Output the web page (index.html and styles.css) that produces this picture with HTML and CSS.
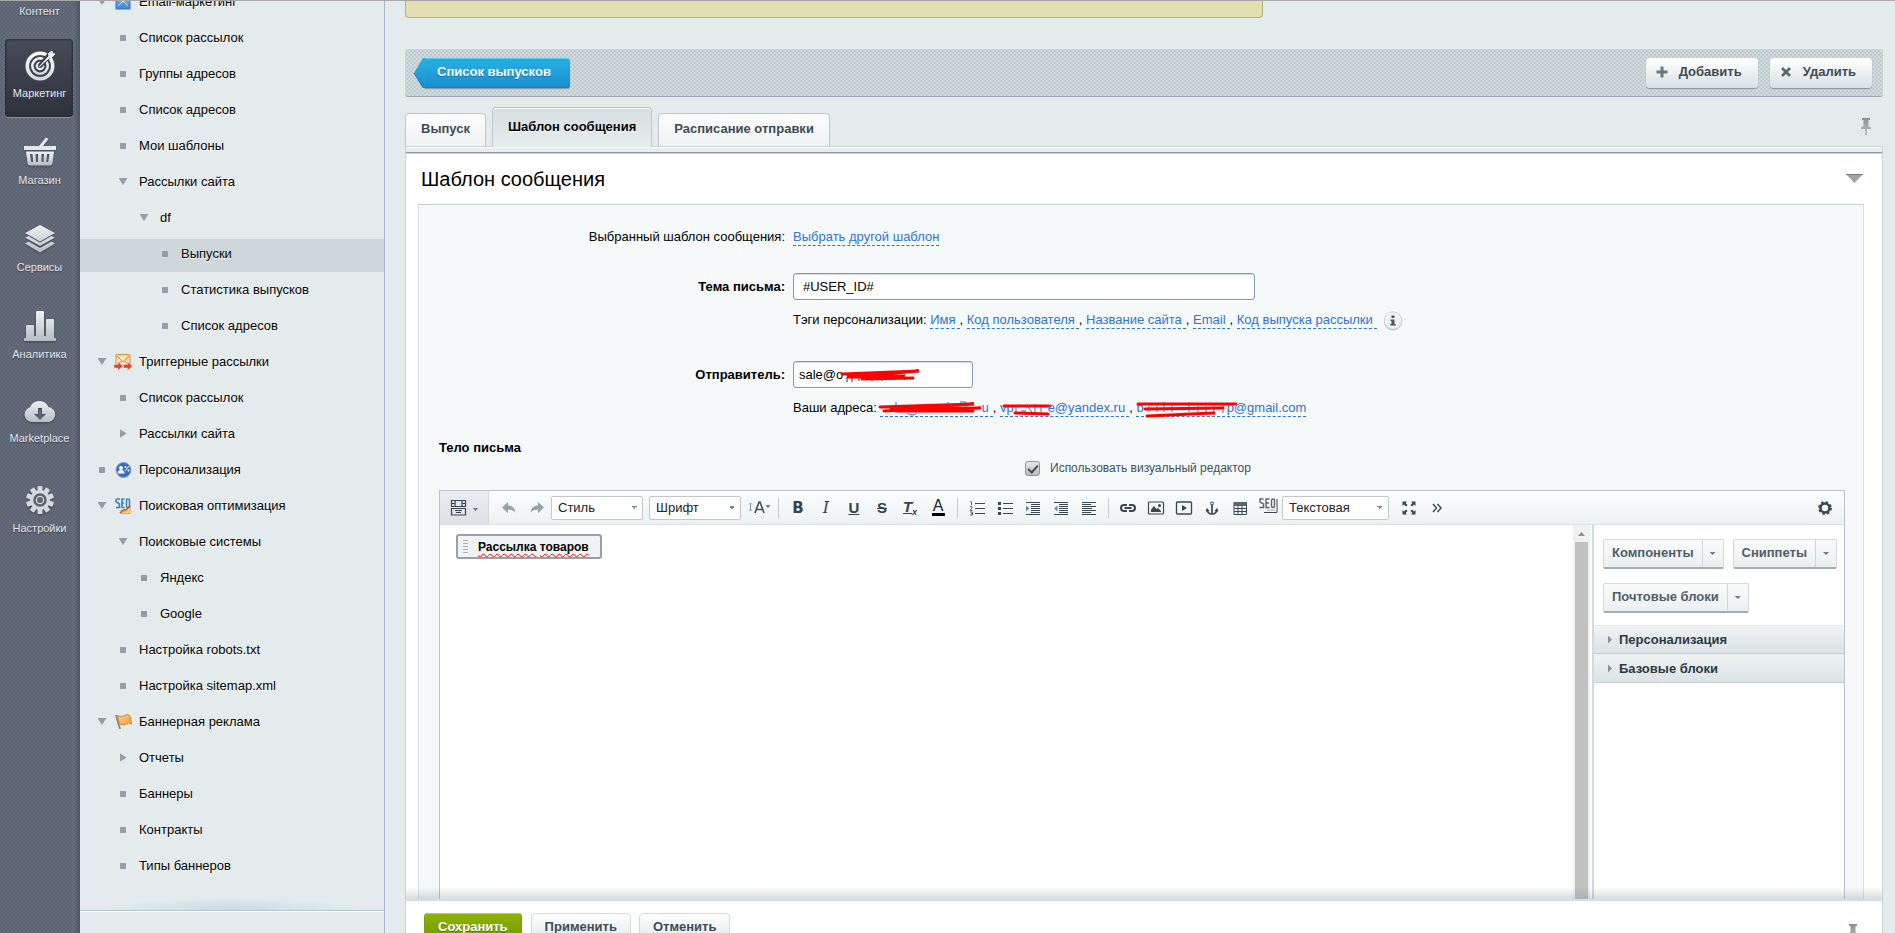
FILE: index.html
```html
<!DOCTYPE html>
<html lang="ru">
<head>
<meta charset="utf-8">
<title>Шаблон сообщения</title>
<link rel="stylesheet" href="styles.css">
</head>
<body>
<svg class="defs" width="0" height="0" aria-hidden="true">
  <defs>
    <linearGradient id="steel" x1="0" y1="0" x2="0" y2="1"><stop offset="0" stop-color="#eef2f3"/><stop offset="1" stop-color="#b3bec2"/></linearGradient>
    <linearGradient id="white" x1="0" y1="0" x2="0" y2="1"><stop offset="0" stop-color="#ffffff"/><stop offset="1" stop-color="#d3dbde"/></linearGradient>
    <linearGradient id="pin" x1="0" y1="0" x2="0" y2="1"><stop offset="0" stop-color="#8b9296"/><stop offset="1" stop-color="#a9b0b3"/></linearGradient>
    <linearGradient id="blue" x1="0" y1="0" x2="0" y2="1"><stop offset="0" stop-color="#8cbcf0"/><stop offset="1" stop-color="#3d7fd6"/></linearGradient>
    <linearGradient id="orange" x1="0" y1="0" x2="1" y2="1"><stop offset="0" stop-color="#ffcf95"/><stop offset="1" stop-color="#f39a3e"/></linearGradient>
  </defs>
</svg>
<div class="app">
  <nav class="rail">
    <a class="rail-item rail-first" href="#"><span class="rail-icon"></span>Контент</a>
    <a class="rail-item active" href="#"><span class="rail-icon"><svg width="32" height="32" viewBox="0 0 32 32"><circle cx="16" cy="17" r="12.700" fill="none" stroke="url(#white)" stroke-width="3.600"/><circle cx="16" cy="17" r="7.700" fill="none" stroke="url(#white)" stroke-width="2.600"/><circle cx="16" cy="17" r="3.200" fill="none" stroke="#e3e9eb" stroke-width="2.200"/><path d="M16 17L26 5" stroke="#3c404c" stroke-width="5"/><path d="M15.500 17.500L25 7l-.5-2.500L28 2l.3 2.500 2.700.5-3.500 3.500H25.500z" fill="#e9eef0" stroke="#e9eef0"/></svg></span>Маркетинг</a>
    <a class="rail-item" href="#"><span class="rail-icon"><svg width="32" height="30" viewBox="0 0 32 30"><path d="M15 9L22 0.500l2.500 1.500L19 9h13v4H0V9z" fill="#e4eaec"/><path fill-rule="evenodd" fill="url(#steel)" d="M2 14.500h28l-1.500 12q-.3 2-2.500 2H6q-2.200 0-2.500-2zM6 17l1.200 8h2L8.500 17zM11.500 17l.5 8h2v-8zM17.500 17v8h2l.5-8zM23 17l-.8 8h2l1.300-8z"/></svg></span>Магазин</a>
    <a class="rail-item" href="#"><span class="rail-icon"><svg width="32" height="30" viewBox="0 0 32 30"><path fill="url(#steel)" d="M16 1l15 8-15 8.500L1 9zM1 13.500L4.500 12 16 18.500 27.500 12l3.500 1.500L16 22zM1 19.500L4.500 17.500 16 24l11.500-6.500 3.500 2L16 28.500z"/></svg></span>Сервисы</a>
    <a class="rail-item" href="#"><span class="rail-icon"><svg width="32" height="32" viewBox="0 0 32 32"><path fill="url(#steel)" d="M2 28V16q0-1 1-1h6q1 0 1 1v10h2V2q0-1 1-1h6q1 0 1 1v24h2V10q0-1 1-1h6q1 0 1 1v18h2v3H0v-3z"/></svg></span>Аналитика</a>
    <a class="rail-item rail-cloud" href="#"><span class="rail-icon"><svg width="32" height="24" viewBox="0 0 32 24"><path fill-rule="evenodd" fill="url(#steel)" d="M8 23a7.500 7.500 0 0 1-2-14.700A10 10 0 0 1 24.500 8 7.600 7.600 0 0 1 25 23zM14 9v6h-4l6 6 6-6h-4V9z"/></svg></span>Marketplace</a>
    <a class="rail-item" href="#"><span class="rail-icon"><svg width="30" height="30" viewBox="-15 -15 30 30"><g fill="#d3dadd"><rect x="-2.500" y="-14" width="5" height="28" rx="1"/><rect x="-2.500" y="-14" width="5" height="28" rx="1" transform="rotate(36)"/><rect x="-2.500" y="-14" width="5" height="28" rx="1" transform="rotate(72)"/><rect x="-2.500" y="-14" width="5" height="28" rx="1" transform="rotate(108)"/><rect x="-2.500" y="-14" width="5" height="28" rx="1" transform="rotate(144)"/><circle r="10"/></g><circle r="5.500" fill="#d3dadd" stroke="#5c6270" stroke-width="2.500"/><circle r="3" fill="#5f6574"/></svg></span>Настройки</a>
  </nav>

  <nav class="tree">
    <ul class="tree-list">
      <li class="lv0"><i class="mark open"></i><svg class="tico" width="18" height="18" viewBox="0 0 18 18"><rect x="2" y="2" width="14" height="14" fill="url(#blue)" stroke="#3a77c8"/><path d="M4 13l5-5 5 5M4 5l5 4 5-4" fill="none" stroke="#d7e8fb"/></svg><a href="#">Email-маркетинг</a></li>
      <li class="lv1"><i class="mark dot"></i><a href="#">Список рассылок</a></li>
      <li class="lv1"><i class="mark dot"></i><a href="#">Группы адресов</a></li>
      <li class="lv1"><i class="mark dot"></i><a href="#">Список адресов</a></li>
      <li class="lv1"><i class="mark dot"></i><a href="#">Мои шаблоны</a></li>
      <li class="lv1"><i class="mark open"></i><a href="#">Рассылки сайта</a></li>
      <li class="lv2"><i class="mark open"></i><a href="#">df</a></li>
      <li class="lv3 current"><i class="mark dot"></i><a href="#">Выпуски</a></li>
      <li class="lv3"><i class="mark dot"></i><a href="#">Статистика выпусков</a></li>
      <li class="lv3"><i class="mark dot"></i><a href="#">Список адресов</a></li>
      <li class="lv0"><i class="mark open"></i><svg class="tico" width="18" height="18" viewBox="0 0 18 18"><rect x="2" y="1.500" width="14" height="12" rx="1" fill="#fde3b8" stroke="#e58a35"/><path d="M2.500 2.500L9 9l6.500-6.500M3 13l4-5M15 13l-4-5" fill="none" stroke="#e58a35"/><path d="M0 11.500h4V9l5 4-5 4.500V15H0zM9.500 11.500h4V9l5 4-5 4.500V15h-4z" fill="#d8483d" stroke="#f6d6cf" stroke-width=".5"/></svg><a href="#">Триггерные рассылки</a></li>
      <li class="lv1"><i class="mark dot"></i><a href="#">Список рассылок</a></li>
      <li class="lv1"><i class="mark shut"></i><a href="#">Рассылки сайта</a></li>
      <li class="lv0"><i class="mark dot"></i><svg class="tico" width="18" height="18" viewBox="0 0 18 18"><circle cx="9.500" cy="9" r="7.500" fill="#3c6cc0" stroke="#7da0dc"/><circle cx="7" cy="7" r="2" fill="#fff"/><path d="M3.500 12.500q0-3.500 3.500-3.500t3.500 3.500z" fill="#fff"/><path d="M11 10l4-5" stroke="#fff"/><circle cx="11.500" cy="6" r="1" fill="#fff"/><circle cx="14.500" cy="9.500" r="1" fill="#fff"/></svg><a href="#">Персонализация</a></li>
      <li class="lv0"><i class="mark open"></i><svg class="tico" width="18" height="18" viewBox="0 0 18 18"><path d="M7 16.500V13l3 1 6-5.500v8z" fill="#fbd36b" stroke="#e0a030" stroke-width=".8"/><path d="M6 2H3.500Q2 2 2 3.500v1L5.500 7v3.500H2M10.500 2H8v8.500h2.500M8 6h2" fill="none" stroke="#3d80c9" stroke-width="1.600"/><rect x="12.500" y="2" width="3" height="8.500" rx="1" fill="none" stroke="#3d80c9" stroke-width="1.500"/><path d="M6 16l4-3.500 1.500 1L16 9" fill="none" stroke="#d6442c" stroke-width="1.200"/></svg><a href="#">Поисковая оптимизация</a></li>
      <li class="lv1"><i class="mark open"></i><a href="#">Поисковые системы</a></li>
      <li class="lv2"><i class="mark dot"></i><a href="#">Яндекс</a></li>
      <li class="lv2"><i class="mark dot"></i><a href="#">Google</a></li>
      <li class="lv1"><i class="mark dot"></i><a href="#">Настройка robots.txt</a></li>
      <li class="lv1"><i class="mark dot"></i><a href="#">Настройка sitemap.xml</a></li>
      <li class="lv0"><i class="mark open"></i><svg class="tico" width="18" height="18" viewBox="0 0 18 18"><path d="M2 2l4 14" stroke="#8b8b86" stroke-width="2"/><path d="M3.500 2.500q4 2.500 7 0t5.500.500l1.500 8q-3-2-5.500 0t-6.500 0z" fill="url(#orange)" stroke="#d98428"/></svg><a href="#">Баннерная реклама</a></li>
      <li class="lv1"><i class="mark shut"></i><a href="#">Отчеты</a></li>
      <li class="lv1"><i class="mark dot"></i><a href="#">Баннеры</a></li>
      <li class="lv1"><i class="mark dot"></i><a href="#">Контракты</a></li>
      <li class="lv1"><i class="mark dot"></i><a href="#">Типы баннеров</a></li>
    </ul>
    <div class="tree-end"></div>
  </nav>

  <main class="main">
    <div class="notice"></div>
    <div class="actions">
      <a class="back" href="#"><svg width="11" height="30" viewBox="0 0 11 30"><defs><linearGradient id="arrow" x1="0" y1="0" x2="0" y2="1"><stop offset="0" stop-color="#25b2e2"/><stop offset="1" stop-color="#1b8dd2"/></linearGradient></defs><path d="M11 0H9L0 15l9 15h2z" fill="url(#arrow)"/><path d="M0 15l9 14.500h2" fill="none" stroke="#1380bb"/></svg><span>Список выпусков</span></a>
      <div class="actions-right">
        <button class="btn" type="button"><svg width="12" height="12" viewBox="0 0 12 12"><path d="M4.500.500h3v4h4v3h-4v4h-3v-4h-4v-3h4z" fill="#6c777c"/></svg>Добавить</button>
        <button class="btn" type="button"><svg width="12" height="12" viewBox="0 0 12 12"><path d="M2 2l8 8M10 2l-8 8" stroke="#5d686e" stroke-width="2.800"/></svg>Удалить</button>
      </div>
    </div>
    <div class="tabs">
      <button class="tab" type="button">Выпуск</button>
      <button class="tab tab-on" type="button">Шаблон сообщения</button>
      <button class="tab" type="button">Расписание отправки</button>
      <svg class="tabs-pin" width="10" height="17" viewBox="0 0 10 17"><path d="M1 0h8v2H7.500v6L10 9.500V11H0V9.500L2.500 8V2H1z" fill="url(#pin)"/><path d="M5 11v6" stroke="#848b8f"/></svg>
    </div>
    <div class="panel">
      <header class="panel-head"><h1>Шаблон сообщения</h1><svg width="18" height="9" viewBox="0 0 18 9"><path d="M0 0h17L8.500 9z" fill="#9ba3a6"/><path d="M0 .5h17" stroke="#767e82"/></svg></header>
      <form class="sheet" id="letter">
        <div class="row row-template"><span class="lbl">Выбранный шаблон сообщения:</span><div><a class="dash" href="#">Выбрать другой шаблон</a></div></div>
        <div class="row row-field"><label class="lbl strong" for="subject">Тема письма:</label><input class="txt txt-wide" id="subject" type="text" value="#USER_ID#"></div>
        <div class="row row-hint"><span></span><div class="hint">Тэги персонализации: <a class="dash tail" href="#">Имя</a>, <a class="dash tail" href="#">Код пользователя</a>, <a class="dash tail" href="#">Название сайта</a>, <a class="dash tail" href="#">Email</a>, <a class="dash tail" href="#">Код выпуска рассылки</a><svg class="info" width="20" height="20" viewBox="0 0 20 20"><circle cx="10" cy="10.500" r="9" fill="#b9c0c3"/><circle cx="10" cy="9.500" r="8.700" fill="#f0f3f4" stroke="#c9d0d2" stroke-width=".8"/><path d="M8.500 4.500h3v2.500h-3zM7.500 8.500h4V13h1.200v1.500H7.300V13h1.200v-3h-1z" fill="#4c565b"/></svg></div></div>
        <div class="row row-field"><label class="lbl strong" for="sender">Отправитель:</label><div class="over"><input class="txt" id="sender" type="text" value="sale@o"><svg class="scrawl" width="82" height="14" viewBox="0 0 82 14"><path d="M8 8v5M13 8v5M20 7v5M33 7v5M43 3v9M50 3h5M66 8v3" fill="none" stroke="#333"/><path d="M3 5L80 2 8 8l58-1-44 3 52-1" fill="none" stroke="#f00" stroke-width="3" stroke-linecap="round"/></svg></div></div>
        <div class="row row-mails"><span></span><div class="hint">Ваши адреса: <a class="dash tail mail" href="#"><svg width="101" height="14" viewBox="0 0 101 14"><path d="M16 1v11M27 12q5 4 10 0M68 1v4M80 1l6 0v10" fill="none" stroke="#2f73d6"/><path d="M0 6L94 3 10 8l91-1-84 3 76 0M4 10l40-2" fill="none" stroke="#f00" stroke-width="3" stroke-linecap="round"/></svg>u</a>, <a class="dash tail mail" href="#">vp<svg width="34" height="14" viewBox="0 0 34 14"><path d="M2 5v6M7 10h5M14 6l4 5M21 3v8M27 6v5" fill="none" stroke="#2f73d6"/><path d="M-10 5h46M1 12l33 1" fill="none" stroke="#f00" stroke-width="3" stroke-linecap="round"/></svg>e@yandex.ru</a>, <a class="dash mail" href="#">b<svg width="83" height="14" viewBox="0 0 83 14"><path d="M5 5v6M13 5v6M20 1v10M28 5v6M45 1v10M54 5v6M62 5v6M70 5v9M79 2v10" fill="none" stroke="#2f73d6"/><path d="M-6 3h98M1 8l78-1M3 15l67-3" fill="none" stroke="#f00" stroke-width="3" stroke-linecap="round"/></svg>p@gmail.com</a></div></div>
        <h2 class="body-title">Тело письма</h2>
        <div class="visual"><input id="visual" type="checkbox" checked><label for="visual">Использовать визуальный редактор</label></div>

        <section class="editor">
          <div class="bar">
            <button class="view" type="button" aria-label="Вид"><svg width="28" height="18" viewBox="0 0 28 18"><path d="M1.500 1.500h14v6h-14zM5 1.500v6M12 1.500v6M2 4.500h3M12 4.500h3M1.500 9.500h14v6.500h-14zM5 11.500h7M6 13.500h5" fill="none" stroke="#3a4650" stroke-width="1.200"/><path d="M23 9h5l-2.500 3z" fill="#6b757c"/></svg></button>
            <div class="group group-undo">
              <button class="tool" type="button" aria-label="Отменить"><svg width="16" height="14" viewBox="0 0 16 14"><path d="M7 1v3.500q6.500 0 7.500 7Q12 8.500 7 8.500V12L1 6.500z" fill="#98a1a6"/></svg></button>
              <button class="tool" type="button" aria-label="Повторить"><svg width="16" height="14" viewBox="0 0 16 14"><path d="M9 1v3.500q-6.500 0-7.500 7Q4 8.500 9 8.500V12l6-5.500z" fill="#98a1a6"/></svg></button>
            </div>
            <select class="pick" aria-label="Стиль"><option>Стиль</option></select>
            <select class="pick" aria-label="Шрифт"><option>Шрифт</option></select>
            <button class="tool tool-size" type="button" aria-label="Размер"><svg width="24" height="16" viewBox="0 0 24 16"><path d="M2.500 3v8M1 4.500L2.500 3 4 4.500M1 9.500L2.500 11 4 9.500" fill="none" stroke="#8b959a"/><path d="M7 13l4-11h1l4 11M8.500 9.500h6" fill="none" stroke="#4a565e" stroke-width="1.700"/><path d="M17.500 5h5l-2.500 3z" fill="#6b757c"/></svg></button>
            <span class="sep"></span>
            <div class="group">
              <button class="tool" type="button" aria-label="Жирный"><b>B</b></button>
              <button class="tool" type="button" aria-label="Курсив"><em>I</em></button>
              <button class="tool" type="button" aria-label="Подчеркнутый"><u>U</u></button>
              <button class="tool" type="button" aria-label="Зачеркнутый"><s>S</s></button>
              <button class="tool" type="button" aria-label="Очистить"><span class="clear">T<sub>x</sub></span></button>
              <button class="tool" type="button" aria-label="Цвет"><span class="color">A</span></button>
            </div>
            <span class="sep"></span>
            <div class="group">
              <button class="tool" type="button" aria-label="Нумерация"><svg width="16" height="16" viewBox="0 0 16 16"><path d="M6 3.500h10M6 8.500h10M6 13.500h10" stroke="#3a4650"/><path d="M1.500 1.500h1V5M1 6.500h2v1.500L1 10.500h2.500M1 12h2.500v3H1M2 13.500h1" fill="none" stroke="#59646c"/></svg></button>
              <button class="tool" type="button" aria-label="Список"><svg width="16" height="16" viewBox="0 0 16 16"><path d="M6 3.500h10M6 8.500h10M6 13.500h10" stroke="#3a4650"/><path d="M1 2h3v3H1zM1 7h3v3H1zM1 12h3v3H1z" fill="#3a4650"/></svg></button>
              <button class="tool" type="button" aria-label="Увеличить отступ"><svg width="16" height="16" viewBox="0 0 16 16"><path d="M1 2.500h14M6 4.500h9M6 6.500h9M6 8.500h9M6 10.500h9M6 12.500h9M1 14.500h14" stroke="#3a4650"/><path d="M1 5.500v6l3.500-3z" fill="#7d878d"/></svg></button>
              <button class="tool" type="button" aria-label="Уменьшить отступ"><svg width="16" height="16" viewBox="0 0 16 16"><path d="M1 2.500h14M6 4.500h9M6 6.500h9M6 8.500h9M6 10.500h9M6 12.500h9M1 14.500h14" stroke="#3a4650"/><path d="M4.500 5.500v6L1 8.500z" fill="#7d878d"/></svg></button>
              <button class="tool" type="button" aria-label="Выравнивание"><svg width="16" height="16" viewBox="0 0 16 16"><path d="M1 2.500h14M1 4.500h9M1 6.500h14M1 8.500h10M1 10.500h14M1 12.500h9M1 14.500h14" stroke="#3a4650"/></svg></button>
            </div>
            <span class="sep"></span>
            <div class="group">
              <button class="tool" type="button" aria-label="Ссылка"><svg width="18" height="16" viewBox="0 0 18 16"><path d="M8 11H5a3 3 0 0 1 0-6h3M10 5h3a3 3 0 0 1 0 6h-3M5.500 8h7" fill="none" stroke="#3a4650" stroke-width="2"/></svg></button>
              <button class="tool" type="button" aria-label="Изображение"><svg width="16" height="16" viewBox="0 0 16 16"><rect x="0.500" y="2" width="15" height="12" rx="1" fill="none" stroke="#3a4650" stroke-width="1.200"/><path d="M3 12V9.500L6 6l2.500 3 1.500-1 3 3v1z" fill="#3a4650"/><circle cx="11.500" cy="5.500" r="1.500" fill="#3a4650"/></svg></button>
              <button class="tool" type="button" aria-label="Видео"><svg width="16" height="16" viewBox="0 0 16 16"><rect x="0.500" y="2" width="15" height="12" rx="1" fill="none" stroke="#3a4650" stroke-width="1.300"/><path d="M6 5l5 3-5 3z" fill="#3a4650"/></svg></button>
              <button class="tool" type="button" aria-label="Якорь"><svg width="14" height="16" viewBox="0 0 14 16"><circle cx="7" cy="3.500" r="1.500" fill="none" stroke="#3a4650"/><path d="M7 5v9M2 9q.5 5 5 5t5-5" fill="none" stroke="#3a4650" stroke-width="1.700"/><path d="M.5 11.500L2 8l2.500 3zM13.500 11.500L12 8l-2.500 3z" fill="#3a4650"/></svg></button>
              <button class="tool" type="button" aria-label="Таблица"><svg width="16" height="16" viewBox="0 0 16 16"><path d="M2 2.500h12.500v12H2zM2 8.500h12M2 11.500h12M6 5v9M10 5v9" fill="none" stroke="#3a4650"/><path d="M2 2h12.500v4H2z" fill="#59646c"/></svg></button>
              <button class="tool" type="button" aria-label="SEO"><svg width="20" height="20" viewBox="0 0 20 20"><path d="M5.500 1H2v3l3.500 2v3.500H1.500M11.500 1H8v8.500h3.500M8 5h3" fill="none" stroke="#59646c" stroke-width="1.400"/><rect x="13.500" y="1" width="3" height="8.500" rx="1.500" fill="none" stroke="#59646c" stroke-width="1.400"/><path d="M19 1v13.500H6" fill="none" stroke="#3a4650"/><path d="M9 12h8" stroke="#a5adb2"/></svg></button>
            </div>
            <select class="pick pick-mode" aria-label="Версия"><option>Текстовая</option></select>
            <button class="tool" type="button" aria-label="Во весь экран"><svg width="16" height="16" viewBox="0 0 16 16"><path d="M1.500 6V1.500H6L4.600 3 6.500 5 5 6.500 3 4.600zM10 1.500h4.500V6L13 4.600 11 6.500 9.500 5l1.900-2zM1.500 10v4.500H6L4.600 13l1.900-2L5 9.500l-2 1.900zM14.500 10v4.500H10l1.400-1.500-1.900-2L11 9.500l2 1.900z" fill="#3a4650"/></svg></button>
            <button class="tool" type="button" aria-label="Еще"><svg width="12" height="12" viewBox="0 0 12 12"><path d="M2 2l3.500 4L2 10M6.500 2L10 6l-3.500 4" fill="none" stroke="#3a4650" stroke-width="1.400"/></svg></button>
            <button class="tool gear" type="button" aria-label="Параметры"><svg width="16" height="16" viewBox="-8 -8 16 16"><circle r="4.500" fill="none" stroke="#3a4650" stroke-width="2.600"/><circle r="6" fill="none" stroke="#3a4650" stroke-width="1.800" stroke-dasharray="2.400 2.310"/></svg></button>
          </div>
          <div class="work">
            <div class="page"><span class="chip"><svg width="5" height="13" viewBox="0 0 5 13"><path d="M0 .5h5M0 3.500h5M0 6.500h5M0 9.500h5M0 12.500h5" stroke="#aab0b5"/></svg><b><span class="typo">Рассылка</span> <span class="typo">товаров</span></b></span></div>
            <div class="scroll"><svg width="17" height="17" viewBox="0 0 17 17"><path d="M5 11h7L8.500 7z" fill="#8f8f8f"/></svg><div class="thumb"></div></div>
            <aside class="side">
              <div class="split-wrap">
                <button class="split" type="button"><span>Компоненты</span><i></i></button>
                <button class="split" type="button"><span>Сниппеты</span><i></i></button>
                <button class="split" type="button"><span>Почтовые блоки</span><i></i></button>
              </div>
              <button class="fold" type="button">Персонализация</button>
              <button class="fold" type="button">Базовые блоки</button>
            </aside>
          </div>
        </section>
      </form>
      <div class="veil"></div>
    </div>
    <footer class="foot">
      <button class="save" type="submit" form="letter">Сохранить</button>
      <button class="plain" type="button">Применить</button>
      <button class="plain" type="button">Отменить</button>
      <svg class="foot-pin" width="10" height="17" viewBox="0 0 10 17"><path d="M1 0h8v2H7.500v6L10 9.500V11H0V9.500L2.500 8V2H1z" fill="url(#pin)"/></svg>
    </footer>
  </main>
</div>
</body>
</html>
```
FILE: styles.css
```css
* { box-sizing: border-box; }
body { margin: 0; font: 13px/18px "Liberation Sans", Arial, sans-serif; color: #000; background: #e3ebed; }
button, input, select { font: inherit; margin: 0; }
button { padding: 0; border: 0; background: none; cursor: pointer; }
a { color: inherit; text-decoration: none; }
svg { display: block; flex: none; overflow: visible; }
.defs { position: absolute; }
.app { display: flex; height: 100vh; overflow: hidden; border-top: 1px solid #a8a8a8; }

/* dark rail */
.rail { flex: 0 0 80px; overflow: hidden; padding: 0 7px 0 5px; color: #e3e7ea;
  background: linear-gradient(90deg, transparent 74px, #4f5563), radial-gradient(#5a6170 1px, transparent 1px) 0 0 / 4px 4px, radial-gradient(#5a6170 1px, transparent 1px) 2px 2px / 4px 4px, #666d7b; }
.rail-item { display: flex; flex-direction: column; align-items: center; height: 78px; margin-bottom: 9px; padding: 5px 0 0 1px; border-radius: 4px; font-size: 11px; line-height: 16px; text-shadow: 0 1px 1px #3a3f4b; }
.rail-icon { display: flex; align-items: center; justify-content: center; height: 41px; filter: drop-shadow(0 1px 1px #3f4552); }
.rail-first { margin-top: -44px; height: 73px; }
.rail-item.active { background: linear-gradient(#484c58, #2d313b); box-shadow: inset 0 0 2px 1px #2b2f38, 0 1px 0 #8b939e; }
.rail-cloud .rail-icon { height: 38px; }

/* section tree */
.tree { flex: 0 0 305px; overflow: hidden; border-right: 1px solid #a3b9cc; }
.tree-list { list-style: none; margin: -14px 0 0; padding: 0; }
.tree-list li { display: flex; align-items: center; height: 33px; margin-bottom: 3px; padding-bottom: 4px; text-shadow: 0 1px 0 #fff; }
.tree-list .current { background: #cdd7dc; }
.lv0 { padding-left: 15px; }
.lv1 { padding-left: 36px; }
.lv2 { padding-left: 57px; }
.lv3 { padding-left: 78px; }
.mark { flex: 0 0 14px; height: 15px; margin-right: 9px; display: flex; align-items: center; justify-content: center; }
.mark::before { content: ""; background: #939da8; }
.dot::before { width: 6px; height: 6px; border-radius: 1px; }
.open::before { width: 9px; height: 7px; clip-path: polygon(0 0, 100% 0, 50% 100%); }
.shut::before { width: 7px; height: 9px; clip-path: polygon(0 0, 100% 50%, 0 100%); }
.lv0 .mark { margin-right: 5px; }
.tico { margin-right: 7px; }
.tree-end { height: 15px; margin-top: 12px; border-bottom: 1px solid #b4c6d2; box-shadow: 0 1px 0 #fff; background: radial-gradient(ellipse at 50% 100%, #cbd8e2, transparent 60%); }

/* content column */
.main { flex: 1; min-width: 0; display: flex; flex-direction: column; padding: 0 12px 0 20px; }
.notice { width: 858px; max-width: 100%; height: 17px; border: 1px solid #b5af7a; border-top: 0; border-radius: 0 0 4px 4px; background: #e3dfb1; }
.actions { display: flex; align-items: center; justify-content: space-between; height: 48px; margin-top: 31px; padding: 0 11px 0 9px; border-radius: 3px; border-bottom: 1px solid #9aa5ad;
  background: radial-gradient(#c1ccd1 1px, transparent 1px) 0 0 / 4px 4px, radial-gradient(#c1ccd1 1px, transparent 1px) 2px 2px / 4px 4px, #d0dade; }
.back { display: flex; height: 30px; color: #fff; font-weight: bold; text-shadow: 0 1px 0 #14739f; }
.back span { padding: 5px 19px 0 12px; border-radius: 0 3px 3px 0; background: linear-gradient(#25b2e2, #1b8dd2); box-shadow: inset 0 1px 0 #55d0f2, inset 0 -1px 0 #1380bb, 0 1px 1px #8395a0; }
.actions-right { display: flex; gap: 12px; }
.btn { display: flex; align-items: center; gap: 11px; height: 30px; padding: 0 16px 2px 10px; border-radius: 4px; font-weight: bold; color: #3f4b54; background: linear-gradient(#fff, #d7e1e4); box-shadow: 0 1px 1px 0 #87949b; }
.tabs { display: flex; align-items: flex-end; gap: 6px; height: 50px; background: linear-gradient(#cdd5d8, #cdd5d8) 0 100% / 100% 1px no-repeat; }
.tab { height: 34px; padding: 0 15px 2px; border: 1px solid #c0c8cb; border-bottom-color: #cdd5d8; border-radius: 4px 4px 0 0; font-weight: bold; color: #3f4b54; background: linear-gradient(#fdfdfe, #eff3f4); }
.tab-on { height: 40px; padding-bottom: 2px; color: #000; border-bottom: 0; background: linear-gradient(#d5dfe0, #e6edee); box-shadow: inset 0 1px 0 #fff; text-shadow: 0 1px 0 #fff; }
.tabs-pin { margin: 0 12px 12px auto; }
.panel { flex: 1; min-height: 0; overflow: hidden; position: relative; padding: 0 18px 0 12px; background: #fff; border: 1px solid #c9d3d6; border-width: 0 1px; }
.panel-head { display: flex; align-items: center; justify-content: space-between; height: 57px; margin: 0 -18px 0 -12px; padding: 6px 18px 0 15px; background: linear-gradient(#fff 1px, #e6edef 1px 5px, #8f989c 5px 6px, #c9d0d3 6px 7px, #fff 7px); }
.panel-head h1 { margin: 0; font-size: 20px; line-height: 24px; font-weight: normal; }
.sheet { padding: 23px 18px 0 20px; min-height: 720px; border: 1px solid #c5d1d8; border-bottom: 0; border-left-color: #d5e1e6; border-right-color: #d5e1e6; background: #f5f9f9; }

/* form */
.row { display: grid; grid-template-columns: 346px 1fr; column-gap: 8px; align-items: center; }
.lbl { text-align: right; }
.strong, .body-title { font-weight: bold; }
.row-template { margin-bottom: 27px; }
.row-hint { height: 20px; margin: 11px 0 30px; }
.row-mails { margin: 11px 0 20px; }
.dash { display: inline-block; line-height: 17px; color: #2f73d6; border-bottom: 1px dashed #2f73d6; }
.tail { padding-right: 4px; }
.txt { width: 180px; height: 27px; padding: 0 5px; border: 1px solid #8e98a5; border-radius: 3px; background: #fff; box-shadow: inset 0 1px 1px #d3d9dc; }
.txt-wide { width: 462px; max-width: 100%; padding: 0 9px; }
.hint { white-space: nowrap; }
.info { display: inline-block; vertical-align: middle; margin-left: 6px; }
.over { position: relative; }
.scrawl { position: absolute; left: 46px; top: 8px; pointer-events: none; }
.mail svg { display: inline-block; vertical-align: -3px; }
.body-title { margin: 0; font-size: 13px; line-height: 22px; }
.visual { display: flex; align-items: center; gap: 10px; height: 18px; margin-left: 586px; font-size: 12px; color: #42505c; }
.visual input { appearance: none; width: 15px; height: 15px; border: 1px solid #8b9399; border-radius: 3px; background: linear-gradient(#e5e9eb, #b4bbbf); display: grid; place-items: center; }
.visual input::before { content: ""; width: 8px; height: 4px; border: solid #414b52; border-width: 0 0 2px 2px; transform: rotate(-48deg); }

/* editor */
.editor { margin-top: 13px; border: 1px solid #b9c1cc; border-bottom: 0; background: #fff; }
.bar { display: flex; align-items: center; height: 34px; border-bottom: 1px solid #dbe1e3; background: linear-gradient(#fbfdfe, #ecf2f2); color: #35424c; }
.view { display: flex; align-items: center; justify-content: center; align-self: stretch; width: 49px; border-right: 1px solid #d2d9de; background: linear-gradient(#e9ecf0, #dde2e6); }
.group { display: flex; }
.group-undo { margin-left: 6px; }
.tool { display: flex; align-items: center; justify-content: center; width: 28px; height: 26px; color: #35424c; font-size: 15px; }
.tool-size { width: 26px; }
.pick { appearance: none; width: 92px; height: 24px; padding: 0 6px; margin-right: 6px; border: 1px solid #c3c7ca; border-radius: 2px; color: #222;
  background: linear-gradient(45deg, transparent 50%, #7c868b 50%) right 8px center / 3px 3px no-repeat, linear-gradient(-45deg, transparent 50%, #7c868b 50%) right 5px center / 3px 3px no-repeat, #fff; }
.pick-mode { width: 107px; }
.sep { width: 1px; height: 20px; margin: 0 5px; background: #c6ccd0; }
.tool b { font: bold 15px/16px "DejaVu Sans", sans-serif; }
.tool em { font: italic 16px/16px "DejaVu Serif", serif; }
.tool u, .tool s { font: bold 15px/16px "Liberation Sans", sans-serif; }
.clear { font: italic bold 15px/16px "Liberation Sans", sans-serif; text-decoration: underline; }
.clear sub { font-size: 9px; line-height: 8px; vertical-align: -3px; }
.color { width: 13px; font: 16px/14px "Liberation Sans", sans-serif; color: #222; text-align: center; border-bottom: 3px solid #000; }
.gear { margin: 0 5px 0 auto; }
.work { display: flex; height: 460px; }
.page { flex: 1; padding: 9px 16px; }
.chip { display: inline-flex; align-items: center; gap: 10px; height: 25px; padding: 0 11px 0 5px; border: 2px solid #9aa0aa; border-radius: 3px; background: #eff3f5; font-size: 12px; }
.typo { text-decoration: underline wavy #f00 1px; text-underline-offset: 2px; text-decoration-skip-ink: none; }
.scroll { flex: 0 0 17px; display: flex; flex-direction: column; background: #f1f1f1; }
.thumb { flex: 1; margin: 0 2px; background: #c1c1c1; }
.side { flex: 0 0 252px; margin-left: 2px; border-left: 2px solid #cfdbdf; }
.split-wrap { display: flex; flex-wrap: wrap; gap: 14px 9px; padding: 14px 6px 12px 9px; }
.split { display: flex; height: 30px; border: 1px solid #d5dadd; border-bottom: 2px solid #a3acb0; border-radius: 2px; font-weight: bold; color: #4f5e68; background: linear-gradient(#fafbfb, #eaf0f2); }
.split span { padding: 4px 8px; }
.split i { width: 21px; align-self: stretch; display: grid; place-items: center; border-left: 1px solid #d0d6d9; }
.split i::before { content: ""; width: 6px; height: 3px; background: #6f7b82; clip-path: polygon(0 0, 100% 0, 50% 100%); }
.fold { display: flex; align-items: center; gap: 7px; width: 100%; height: 29px; padding-left: 14px; border-top: 1px solid #e8ecee; border-bottom: 1px solid #c6d1d5; font-weight: bold; color: #2d3a44; background: linear-gradient(#eff3f4, #dae3e5); }
.fold::before { content: ""; width: 4px; height: 8px; background: #87929a; clip-path: polygon(0 0, 100% 50%, 0 100%); }

/* bottom bar */
.veil { position: absolute; left: 0; right: 0; bottom: 0; height: 14px; border-bottom: 2px solid #d3dfe4; background: linear-gradient(transparent, rgba(120, 145, 150, .3)); }
.foot { flex: 0 0 32px; display: flex; align-items: flex-start; overflow: hidden; padding: 12px 24px 0 18px; background: #fff; border: 1px solid #c9d3d6; border-width: 0 1px; }
.foot button { flex: none; height: 30px; border-radius: 4px; font-weight: bold; }
.foot .save { margin-right: 9px; padding: 0 14px 3px; color: #fff; background: linear-gradient(#8fb400, #6f9500); box-shadow: inset 0 1px 0 #b9d238, inset 0 0 0 1px #7f9f10; text-shadow: 0 1px 0 #5c7a00; }
.foot .plain { margin-right: 8px; padding: 0 13px 3px; color: #3f4b54; border: 1px solid #d5dadd; background: linear-gradient(#fff, #dfe7ea); }
.foot-pin { margin: 11px 0 0 auto; }
```
